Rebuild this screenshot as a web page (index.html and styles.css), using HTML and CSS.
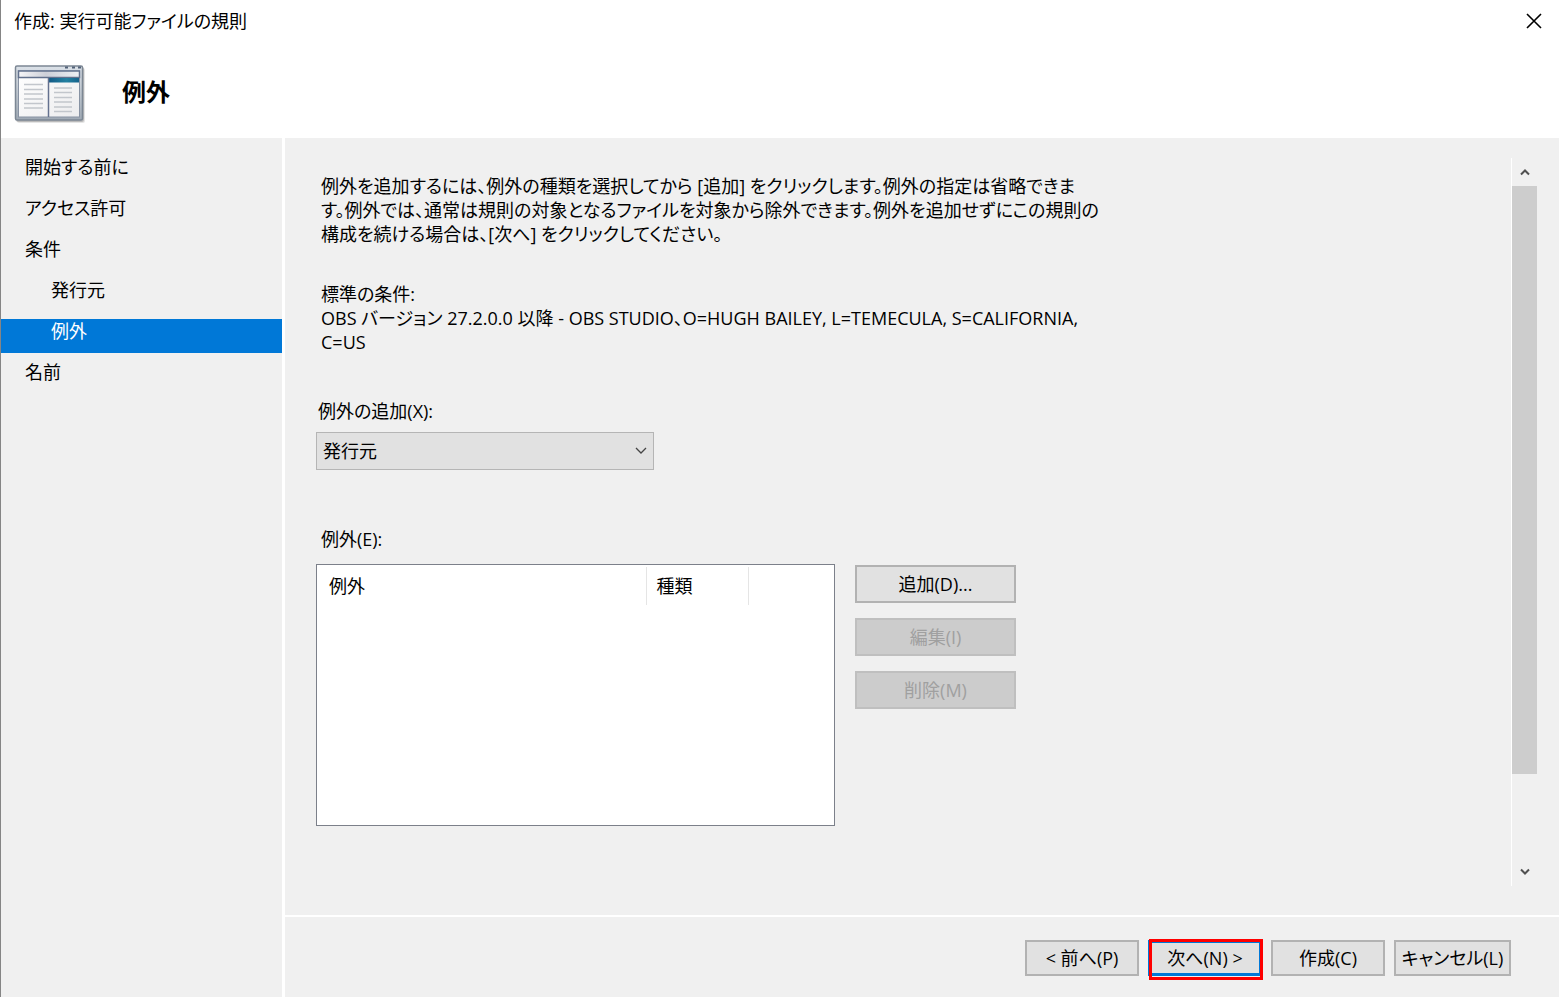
FILE: index.html
```html
<!DOCTYPE html>
<html lang="ja">
<head>
<meta charset="utf-8">
<title>作成: 実行可能ファイルの規則</title>
<link rel="stylesheet" href="styles.css">
</head>
<body>
<div class="window">
  <header class="header">
    <div class="titlebar">
      <span class="title">作成: 実行可能ファイルの規則</span>
      <button class="close" type="button" aria-label="閉じる">
        <svg width="16" height="16" viewBox="0 0 16 16"><path d="M1 1L15 15M15 1L1 15" stroke="#000" stroke-width="1.6" fill="none"/></svg>
      </button>
    </div>
    <div class="banner">
      <svg class="banner-icon" width="74" height="62" viewBox="0 0 74 62" aria-hidden="true">
        <defs>
          <linearGradient id="frame" x1="0" y1="0" x2="0" y2="1"><stop offset="0" stop-color="#dbe1e8"/><stop offset="1" stop-color="#9fa9b4"/></linearGradient>
          <linearGradient id="bar" x1="0" y1="0" x2="1" y2="0"><stop offset="0" stop-color="#f6f6f8"/><stop offset=".45" stop-color="#cdd0d8"/><stop offset="1" stop-color="#eef0f4"/></linearGradient>
          <linearGradient id="teal" x1="0" y1="0" x2="1" y2="0"><stop offset="0" stop-color="#135a86"/><stop offset=".6" stop-color="#2481a1"/><stop offset="1" stop-color="#15638c"/></linearGradient>
          <linearGradient id="page" x1="0" y1="0" x2="1" y2="1"><stop offset="0" stop-color="#fff"/><stop offset="1" stop-color="#ececee"/></linearGradient>
        </defs>
        <rect x="3" y="4" width="68" height="55" rx="2" fill="#000" opacity=".1"/>
        <rect x="2" y="3" width="68" height="55" rx="2" fill="#000" opacity=".18"/>
        <rect x="1.5" y="2" width="67" height="54" rx="1.5" fill="url(#frame)" stroke="#7c8794" stroke-width="1.5"/>
        <path d="M51 3.5h3M58 3.500h3M64 3.500h3" stroke="#536279" stroke-width="2"/>
        <rect x="4.500" y="7" width="61" height="46" fill="url(#page)" stroke="#8792a3"/>
        <rect x="4.500" y="7" width="61" height="6.500" fill="url(#bar)" stroke="#62718d" stroke-width="1.500"/>
        <rect x="34" y="14" width="31" height="4.500" fill="url(#teal)"/>
        <path d="M34.500 14v39" stroke="#64718f" stroke-width="1.500"/>
        <path d="M10 20.500h19M10 25.500h19M10 30h19M10 35h19M10 39.500h19M10 44h19" stroke="#c2c6cc" stroke-width="1.500"/>
        <path d="M40 24h18M40 28.500h18M40 33.500h18M40 38h18M40 43h18M40 47.500h18" stroke="#c2c6cc" stroke-width="1.500"/>
      </svg>
      <h1 class="heading">例外</h1>
    </div>
  </header>
  <div class="body">
    <nav class="steps">
      <ul class="step-list">
        <li class="step">開始する前に</li>
        <li class="step">アクセス許可</li>
        <li class="step">条件</li>
        <li class="step step-child">発行元</li>
        <li class="step step-child step-current" aria-current="step">例外</li>
        <li class="step">名前</li>
      </ul>
    </nav>
    <div class="content">
      <div class="pane">
        <main class="form">
          <p class="text intro">例外を追加するには、例外の種類を選択してから [追加] をクリックします。例外の指定は省略できま<br>す。例外では、通常は規則の対象となるファイルを対象から除外できます。例外を追加せずにこの規則の<br>構成を続ける場合は、[次へ] をクリックしてください。</p>
          <p class="text condition">標準の条件:<br>OBS バージョン 27.2.0.0 以降 - OBS STUDIO、O=HUGH BAILEY, L=TEMECULA, S=CALIFORNIA,<br>C=US</p>
          <label class="label add-label" for="kind">例外の追加(X):</label>
          <div class="select-wrap">
            <select class="select" id="kind"><option>発行元</option></select>
            <svg class="select-arrow" width="12" height="8" viewBox="0 0 12 8" aria-hidden="true"><path d="M1 1L6 6L11 1" stroke="#444" stroke-width="1.3" fill="none"/></svg>
          </div>
          <div class="label list-label" id="list-label">例外(E):</div>
          <div class="list-row">
            <div class="list">
              <table class="table" aria-labelledby="list-label">
                <thead><tr><th class="col-name">例外</th><th class="col-kind">種類</th><th class="col-rest"></th></tr></thead>
              </table>
            </div>
            <div class="actions">
              <button class="button" type="button">追加(D)...</button>
              <button class="button" type="button" disabled>編集(I)</button>
              <button class="button" type="button" disabled>削除(M)</button>
            </div>
          </div>
        </main>
        <div class="scrollbar">
          <button class="scroll-button" type="button" aria-label="上へ"><svg width="10" height="8" viewBox="0 0 10 8"><path d="M1 6.500L5 2.500L9 6.500" stroke="#505050" stroke-width="2" fill="none"/></svg></button>
          <div class="track"><div class="thumb"></div></div>
          <button class="scroll-button" type="button" aria-label="下へ"><svg width="10" height="8" viewBox="0 0 10 8"><path d="M1 1.500L5 5.500L9 1.500" stroke="#505050" stroke-width="2" fill="none"/></svg></button>
        </div>
      </div>
      <footer class="footer">
        <button class="button nav-button" type="button">&lt; 前へ(P)</button>
        <div class="marked"><button class="button nav-button button-default" type="button">次へ(N) &gt;</button></div>
        <button class="button nav-button" type="button">作成(C)</button>
        <button class="button nav-button nav-cancel" type="button">キャンセル(L)</button>
      </footer>
    </div>
  </div>
</div>
</body>
</html>
```
FILE: styles.css
```css
*, *::after { box-sizing: border-box; }

body {
  margin: 0;
  background: #fff;
  color: #000;
  font-family: "Open Sans", "Noto Sans CJK JP", sans-serif;
  font-size: 18px;
  line-height: 24px;
  font-feature-settings: "palt";
}

button, select {
  font: inherit;
  font-feature-settings: inherit;
  color: inherit;
}

.window {
  display: flex;
  flex-direction: column;
  min-height: 100vh;
  border-left: 1px solid #858585;
}

.titlebar {
  display: flex;
  justify-content: space-between;
  align-items: center;
  height: 42px;
  padding: 0 17px 0 13px;
}

.close {
  display: flex;
  padding: 0;
  border: 0;
  background: none;
}

.banner {
  display: flex;
  align-items: flex-start;
  gap: 34px;
  height: 96px;
  padding: 22px 13px 0;
}

.heading {
  margin: 0;
  font-size: 24px;
  line-height: 56px;
  font-weight: 700;
}

.body {
  display: flex;
  flex: 1;
  gap: 3px;
}

.steps {
  width: 281px;
  flex: none;
  background: #f0f0f0;
}

.step-list {
  display: flex;
  flex-direction: column;
  gap: 7px;
  margin: 0;
  padding: 17px 0 0;
  list-style: none;
}

.step {
  height: 34px;
  padding-left: 24px;
}

.step-child { padding-left: 50px; }

.step-current {
  background: #0078d7;
  color: #fff;
}

.content {
  display: flex;
  flex: 1;
  flex-direction: column;
  gap: 2px;
}

.pane {
  display: flex;
  flex: 1;
  justify-content: space-between;
  padding: 20px 22px 29px 31px;
  background: #f0f0f0;
}

.form { padding-top: 16px; }

.text {
  margin: 0 0 36px;
  padding-left: 5px;
  line-height: 24px;
  white-space: nowrap;
}

.condition { margin-bottom: 45px; }

.label {
  display: block;
  padding-left: 2px;
}

.list-label {
  margin-top: 57px;
  padding-left: 5px;
}

.select-wrap {
  display: grid;
  align-items: center;
  width: 338px;
  margin-top: 9px;
}

.select {
  grid-area: 1 / 1;
  height: 38px;
  padding: 0 6px;
  border: 1px solid #b5b5b5;
  border-radius: 0;
  background: #e1e1e1;
  appearance: none;
}

.select-arrow {
  grid-area: 1 / 1;
  justify-self: end;
  margin-right: 7px;
  pointer-events: none;
}

.list-row {
  display: flex;
  gap: 20px;
  margin-top: 13px;
}

.list {
  width: 519px;
  height: 262px;
  padding: 2px;
  border: 1px solid #7c808a;
  background: #fff;
}

.table {
  width: 100%;
  border-collapse: collapse;
  table-layout: fixed;
}

.table th {
  height: 38px;
  padding: 0 10px;
  border-right: 1px solid #e5e5e5;
  font-weight: 400;
  text-align: left;
}

.table .col-name { width: 327px; }
.table .col-kind { width: 102px; }
.table .col-rest { border-right: 0; }

.actions {
  display: flex;
  flex-direction: column;
  gap: 15px;
  padding-top: 1px;
}

.button {
  width: 161px;
  height: 38px;
  padding: 0;
  border: 2px solid #b2b2b2;
  background: #e1e1e1;
  white-space: nowrap;
}

.button:disabled {
  border-color: #bfbfbf;
  background: #ccc;
  color: #a0a0a0;
}

.scrollbar {
  display: flex;
  flex-direction: column;
  width: 26px;
  border-left: 1px solid #fff;
}

.scroll-button {
  display: flex;
  justify-content: center;
  align-items: center;
  height: 28px;
  padding: 0;
  border: 0;
  background: none;
}

.track { flex: 1; }

.thumb {
  height: 87.500%;
  background: #cdcdcd;
}

.footer {
  display: flex;
  justify-content: flex-end;
  gap: 9px;
  height: 80px;
  padding: 23px 48px 0 0;
  background: #f0f0f0;
}

.nav-button {
  width: 114px;
  height: 36px;
}

.nav-cancel { width: 117px; }

.button-default {
  border-width: 3px;
  border-color: #0078d7;
}

.marked { position: relative; }

.marked::after {
  content: "";
  position: absolute;
  inset: -1px -1px auto 1px;
  height: 41px;
  border: 3px solid #f00;
  pointer-events: none;
}
```
